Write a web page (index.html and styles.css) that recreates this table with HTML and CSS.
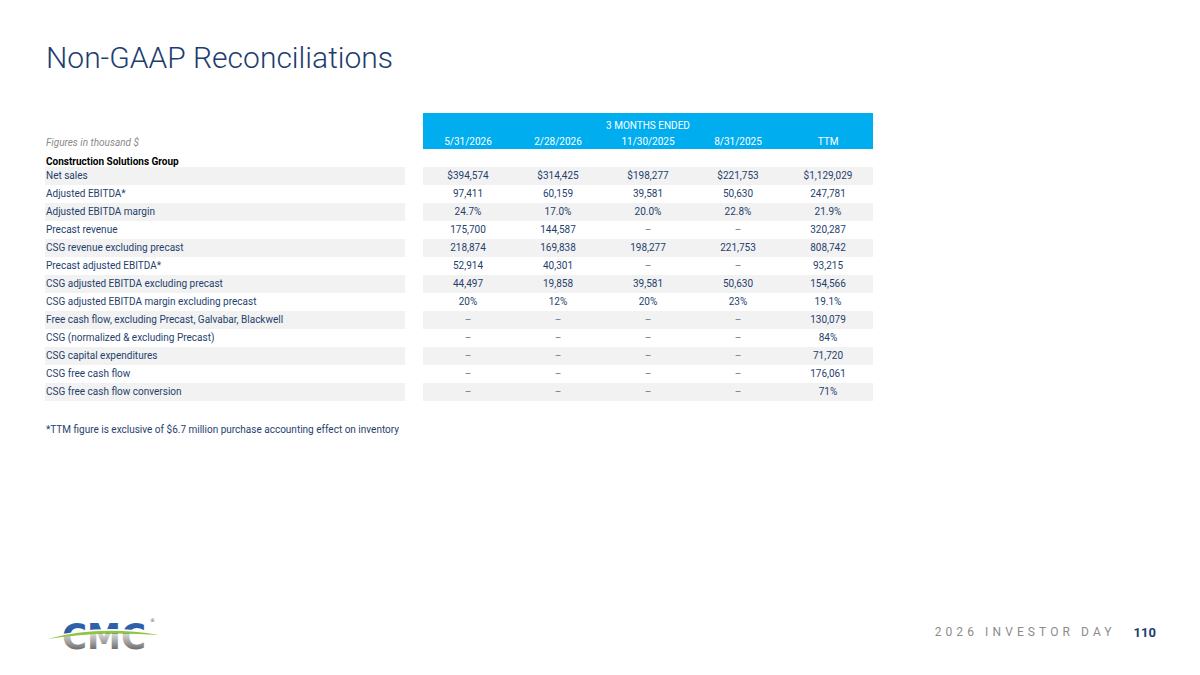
FILE: index.html
```html
<!DOCTYPE html>
<html>
<head>
<meta charset="utf-8">
<link rel="stylesheet" href="styles.css">
</head>
<body>
<div class="slide">
  <h1 class="title">Non-GAAP Reconciliations</h1>
  <div class="table">
    <div class="row head">
      <div class="label figs">Figures in thousand $</div>
      <div class="hdr">
        <div class="hdr-top">3 MONTHS ENDED</div>
        <div class="cells hdr-dates"><span>5/31/2026</span><span>2/28/2026</span><span>11/30/2025</span><span>8/31/2025</span><span>TTM</span></div>
      </div>
    </div>
    <div class="section">Construction Solutions Group</div>
    <div class="row alt"><div class="label">Net sales</div><div class="cells"><span>$394,574</span><span>$314,425</span><span>$198,277</span><span>$221,753</span><span>$1,129,029</span></div></div>
    <div class="row"><div class="label">Adjusted EBITDA*</div><div class="cells"><span>97,411</span><span>60,159</span><span>39,581</span><span>50,630</span><span>247,781</span></div></div>
    <div class="row alt"><div class="label">Adjusted EBITDA margin</div><div class="cells"><span>24.7%</span><span>17.0%</span><span>20.0%</span><span>22.8%</span><span>21.9%</span></div></div>
    <div class="row"><div class="label">Precast revenue</div><div class="cells"><span>175,700</span><span>144,587</span><span class="dash">–</span><span class="dash">–</span><span>320,287</span></div></div>
    <div class="row alt"><div class="label">CSG revenue excluding precast</div><div class="cells"><span>218,874</span><span>169,838</span><span>198,277</span><span>221,753</span><span>808,742</span></div></div>
    <div class="row"><div class="label">Precast adjusted EBITDA*</div><div class="cells"><span>52,914</span><span>40,301</span><span class="dash">–</span><span class="dash">–</span><span>93,215</span></div></div>
    <div class="row alt"><div class="label">CSG adjusted EBITDA excluding precast</div><div class="cells"><span>44,497</span><span>19,858</span><span>39,581</span><span>50,630</span><span>154,566</span></div></div>
    <div class="row"><div class="label">CSG adjusted EBITDA margin excluding precast</div><div class="cells"><span>20%</span><span>12%</span><span>20%</span><span>23%</span><span>19.1%</span></div></div>
    <div class="row alt"><div class="label">Free cash flow, excluding Precast, Galvabar, Blackwell</div><div class="cells"><span class="dash">–</span><span class="dash">–</span><span class="dash">–</span><span class="dash">–</span><span>130,079</span></div></div>
    <div class="row"><div class="label">CSG (normalized &amp; excluding Precast)</div><div class="cells"><span class="dash">–</span><span class="dash">–</span><span class="dash">–</span><span class="dash">–</span><span>84%</span></div></div>
    <div class="row alt"><div class="label">CSG capital expenditures</div><div class="cells"><span class="dash">–</span><span class="dash">–</span><span class="dash">–</span><span class="dash">–</span><span>71,720</span></div></div>
    <div class="row"><div class="label">CSG free cash flow</div><div class="cells"><span class="dash">–</span><span class="dash">–</span><span class="dash">–</span><span class="dash">–</span><span>176,061</span></div></div>
    <div class="row alt"><div class="label">CSG free cash flow conversion</div><div class="cells"><span class="dash">–</span><span class="dash">–</span><span class="dash">–</span><span class="dash">–</span><span>71%</span></div></div>
  </div>
  <p class="note">*TTM figure is exclusive of $6.7 million purchase accounting effect on inventory</p>
  <div class="footer">
    <svg class="logo" viewBox="0 0 120 38" width="120" height="38">
      <defs>
        <linearGradient id="lg" x1="0" y1="8" x2="0" y2="37" gradientUnits="userSpaceOnUse">
          <stop offset="0" stop-color="#3065b2"/>
          <stop offset="0.42" stop-color="#2a58a0"/>
          <stop offset="0.46" stop-color="#d4d4d4"/>
          <stop offset="0.75" stop-color="#9c9c9c"/>
          <stop offset="1" stop-color="#6a6a6a"/>
        </linearGradient>
      </defs>
      <text x="18" y="36" class="logo-text" fill="url(#lg)" textLength="84" lengthAdjust="spacingAndGlyphs">CMC</text>
      <path d="M0,26 Q55,9 119,21 Q55,16 0,26 Z" fill="#ffffff"/>
      <path d="M3,26 Q55,12 115,22 Q55,17.5 3,26 Z" fill="#8dc63f"/>
      <text x="106" y="9" class="reg">®</text>
    </svg>
    <div class="event">2026 INVESTOR DAY</div>
    <div class="page">110</div>
  </div>
</div>
</body>
</html>
```

FILE: styles.css
```css
* { box-sizing: border-box; }
html, body { margin: 0; padding: 0; background: #ffffff; }
body { font-family: Roboto, "Liberation Sans", sans-serif; }

.slide {
  width: 1200px;
  height: 675px;
  display: flex;
  flex-direction: column;
  overflow: hidden;
}

.title {
  margin: 0;
  padding: 38px 0 0 46px;
  font-size: 30px;
  line-height: 40px;
  font-weight: 300;
  color: #1d3d70;
}

.table {
  margin: 35px 0 0 45px;
  width: 828px;
  font-size: 10px;
  color: #1f3f6d;
}

.row {
  display: flex;
  height: 18px;
  line-height: 18px;
}

.label {
  width: 360px;
  margin-right: 18px;
  padding-left: 1px;
  white-space: nowrap;
}

.cells {
  width: 450px;
  display: flex;
}
.cells span {
  flex: 1;
  text-align: center;
}
.cells .dash { color: #6f7f96; }

.row.alt .label,
.row.alt .cells { background: #f2f2f2; }

.row.head { height: 36px; }
.figs {
  font-style: italic;
  color: #8a8a8a;
  padding-top: 22px;
  line-height: 15px;
}
.hdr {
  width: 450px;
  background: #00adef;
  color: #ffffff;
  padding-top: 4px;
}
.hdr-top {
  text-align: center;
  line-height: 18px;
}
.hdr-dates { line-height: 14px; }

.section {
  height: 18px;
  padding: 7px 0 0 1px;
  line-height: 11px;
  font-weight: 700;
  color: #000000;
}

.note {
  margin: 22px 0 0 46px;
  font-size: 10px;
  line-height: 14px;
  color: #1f3f6d;
}

.footer {
  margin-top: auto;
  height: 38px;
  margin-bottom: 24px;
  display: flex;
  align-items: center;
  padding: 0 44px 0 44px;
}
.logo { display: block; overflow: visible; }
.logo-text {
  font-family: "DejaVu Sans", sans-serif;
  font-weight: 700;
  font-size: 36px;
}
.reg {
  font-family: "DejaVu Sans", sans-serif;
  font-size: 5px;
  fill: #555555;
}
.event {
  margin-left: auto;
  font-size: 12px;
  letter-spacing: 4.1px;
  color: #8c8c8c;
}
.page {
  margin-left: 18px;
  font-size: 13px;
  font-weight: 700;
  color: #1d3d70;
}
```
